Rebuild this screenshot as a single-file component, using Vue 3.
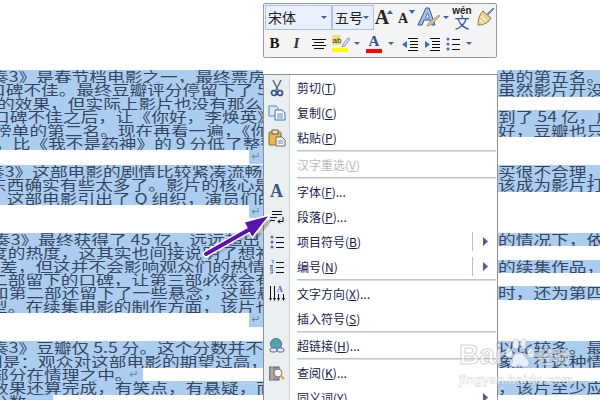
<script setup>
const rows = [
  { l: '奏3》是春节档电影之一，最终票房', x: -9, r: '单的第五名。' },
  { l: '口碑不佳。最终豆瓣评分停留下了 5', x: -12, r: '虽然影片开没' },
  { l: '的效果，但实际上影片也没有那么差', x: -3 },
  { l: '口碑不佳之后，让《你好，李焕英》', x: -8, r: '到了 54 亿，成' },
  { l: '榜单的第二名。现在再看一遍，《你', x: -6, r: '好，豆瓣也只' },
  { l: '，比《我不是药神》的 9 分低了整整', x: -5 },
  { mark: true, h: 14.4 },
  { l: '奏3》这部电影的剧情比较紧凑流畅', x: -13, r: '买很不合理，' },
  { l: '东西确实有些太多了。影片的核心是', x: -11, r: '该成为影片打' },
  { l: '，这部电影引出了 Q 组织，演员们的', x: -11 },
  { mark: true, h: 28 },
  { l: '奏3》最终获得了 45 亿，远远超出', x: -7, r: '的情况下，依' },
  { l: '度的热度，这其实也间接说明了想补', x: -10 },
  { l: '差，但这并不会影响观众们的热情。', x: 0, r: '的续集作品，' },
  { l: '二部留下的口碑，让第三部必然会有', x: -10 },
  { l: '和第二部还留下了一些悬念，这些悬', x: -9, r: '时，还为第四' },
  { l: '型。在续集电影的制作方面，该片也', x: -10 },
  { mark: true, h: 28 },
  { l: '奏3》豆瓣仅 5.5 分。这个分数并不', x: -9, r: '以比较多。最' },
  { l: '别是：观众对这部电影的期望过高，', x: -15, r: '象。在这种情' },
  { l: '部分在情理之中。', x: -9, w: 143, end: true },
  { l: '效果还算完成，有笑点，有悬疑，而', x: -9, r: '，该片至少应' },
  { l: '分数。', x: -9, w: 53 }
]

const items = [
  { t: '剪切', k: 'T', i: 'cut' },
  { t: '复制', k: 'C', i: 'copy' },
  { t: '粘贴', k: 'P', i: 'paste' },
  { sep: true },
  { t: '汉字重选', k: 'V', off: true },
  { sep: true },
  { t: '字体', k: 'F', s: '...', i: 'font' },
  { t: '段落', k: 'P', s: '...', i: 'para' },
  { t: '项目符号', k: 'B', i: 'bullet', sub: true, bar: true },
  { t: '编号', k: 'N', i: 'number', sub: true, bar: true },
  { sep: true },
  { t: '文字方向', k: 'X', s: '...', i: 'dir' },
  { t: '插入符号', k: 'S' },
  { sep: true },
  { t: '超链接', k: 'H', s: '...', i: 'link' },
  { sep: true },
  { t: '查阅', k: 'K', s: '...', i: 'look' },
  { t: '同义词', k: 'Y', sub: true }
]
</script>

<template>
  <div class="page">
    <div class="doc">
      <div v-for="(row, n) in rows" :key="n" class="row" :style="row.h ? { height: row.h + 'px' } : null">
        <div class="left">
          <div v-if="row.mark" class="mark">↵</div>
          <div v-else class="fill" :style="{ width: (row.w || 263) + 'px' }">
            <span class="txt" :style="{ marginLeft: row.x + 'px' }">{{ row.l }}</span>
            <span v-if="row.end" class="ret">↵</span>
          </div>
        </div>
        <div class="gap"></div>
        <div v-if="row.r" class="right"><span class="txt">{{ row.r }}</span></div>
      </div>
    </div>

    <div class="toolbar">
      <div class="tb-row first">
        <div class="combo wide"><span>宋体</span><i class="caret"></i></div>
        <div class="combo narrow"><span>五号</span><i class="caret"></i></div>
        <div class="btn w20"><b class="bigA">A</b><svg class="up" width="6" height="4"><path d="M0 4 3 0l3 4z" fill="#3a5fa8"/></svg></div>
        <div class="btn w22"><b class="smallA">A</b><svg class="up" width="6" height="4"><path d="M0 0h6L3 4z" fill="#3a5fa8"/></svg></div>
        <div class="btn w26">
          <svg width="24" height="22" viewBox="0 0 24 22">
            <path d="M1 19h4l2-5h6l2 5h3L12 2h-3z" fill="#a9c0e6" stroke="#2f559f"/>
            <path d="M8.500 12h4l-2-5z" fill="#fff" stroke="#2f559f" stroke-width=".7"/>
            <path d="M10 20c3 0 5-2 7-4l6-6-1-1-7 5c-2 1-4 3-5 6z" fill="#e2c27a" stroke="#6d7f99" stroke-width=".6"/>
          </svg>
        </div>
        <div class="btn w8"><i class="caret"></i></div>
        <div class="btn w24">
          <span class="wen">wén</span><span class="wen-c">文</span>
        </div>
        <div class="btn w22">
          <svg width="20" height="20" viewBox="0 0 20 20">
            <path d="M12 7 18 1l1 1-6 6z" fill="#6f8fc0" stroke="#456" stroke-width=".5"/>
            <path d="M8 4 16 11c-2 4-6 7-13 7C3 13 4 8 8 4z" fill="#e6cf8f" stroke="#8a7a4a"/>
            <path d="M6 9 11 14M5 13l3 3" stroke="#fff6cf" stroke-width="1.400"/>
          </svg>
        </div>
      </div>
      <div class="tb-row second">
        <div class="btn w21"><b class="bold">B</b></div>
        <div class="btn w23"><i class="ital">I</i></div>
        <div class="btn w21">
          <svg width="16" height="14" viewBox="0 0 16 14" shape-rendering="crispEdges"><path d="M1 2h14M3 5h10M1 8h14M3 11h10" stroke="#111"/></svg>
        </div>
        <div class="btn w23">
          <svg width="18" height="18" viewBox="0 0 18 18">
            <rect x="0" y="0" width="9" height="10" fill="#efe27a"/>
            <text x="0.5" y="8" font-size="8" font-family="Liberation Sans, sans-serif" fill="#223">ab</text>
            <path d="M11 9 16 3l2 1-5 7-3 1z" fill="#d3dbe8" stroke="#6d7f99" stroke-width=".7"/>
            <rect x="0" y="13" width="16" height="4" fill="#fdfd00"/>
          </svg>
        </div>
        <div class="btn w10"><i class="caret"></i></div>
        <div class="btn w24 col">
          <b class="colorA">A</b><i class="redbar"></i>
        </div>
        <div class="btn w10"><i class="caret"></i></div>
        <div class="btn w22 ml3">
          <svg width="16" height="16" viewBox="0 0 16 16"><path d="M6 2.500h10M8 5.500h8M8 8.500h8M8 11.500h8M6 14.500h10" stroke="#111"/><path d="M0 8.500l5-3.500v7z" fill="#3f6cb8"/></svg>
        </div>
        <div class="btn w22">
          <svg width="16" height="16" viewBox="0 0 16 16"><path d="M6 2.500h10M8 5.500h8M8 8.500h8M8 11.500h8M6 14.500h10" stroke="#111"/><path d="M6 8.500 1 5v7z" fill="#3f6cb8"/></svg>
        </div>
        <div class="btn w20">
          <svg width="14" height="14" viewBox="0 0 14 14"><circle cx="2" cy="2" r="1.500" fill="#4a6cb0"/><circle cx="2" cy="7" r="1.500" fill="#4a6cb0"/><circle cx="2" cy="12" r="1.500" fill="#4a6cb0"/><path d="M6 2.500h8M6 7.500h8M6 12.500h8" stroke="#111"/></svg>
        </div>
        <div class="btn w10 ml1"><i class="caret"></i></div>
      </div>
    </div>

    <div class="menu">
      <template v-for="(it, n) in items" :key="n">
        <div v-if="it.sep" class="sep"><div class="gut"></div><div class="line"></div></div>
        <div v-else class="item" :class="{ off: it.off }">
          <div class="gut ic">
            <svg v-if="it.i === 'cut'" width="16" height="18" viewBox="0 0 16 18">
              <path d="M4 1 9 11M12 1 7 11" stroke="#5f6f88" stroke-width="1.600"/>
              <circle cx="5" cy="14" r="2.500" fill="none" stroke="#2c4f96" stroke-width="1.700"/>
              <circle cx="11" cy="14" r="2.500" fill="none" stroke="#2c4f96" stroke-width="1.700"/>
            </svg>
            <svg v-else-if="it.i === 'copy'" width="18" height="16" viewBox="0 0 18 16">
              <path d="M1 1h7l2 2v8H1z" fill="#dbe8f8" stroke="#5a86c4"/>
              <path d="M7 5h7l3 3v7H7z" fill="#fff" stroke="#3f6db8"/>
              <path d="M9 9h6M9 11h6M9 13h6" stroke="#5a86c4"/>
            </svg>
            <svg v-else-if="it.i === 'paste'" width="18" height="18" viewBox="0 0 18 18">
              <rect x="1" y="3" width="12" height="13" rx="1" fill="#e6b94e" stroke="#8a6a1e"/>
              <rect x="4" y="1" width="6" height="4" fill="#e8e4d8" stroke="#6a5a30"/>
              <path d="M8 8h6l3 3v6H8z" fill="#f4f4f4" stroke="#667"/>
              <path d="M10 12h5M10 14h5" stroke="#889"/>
            </svg>
            <b v-else-if="it.i === 'font'" class="fontA">A</b>
            <svg v-else-if="it.i === 'para'" width="14" height="14" viewBox="0 0 14 14">
              <path d="M2 1.500h10M2 4.500h10M0 7.500h7M0 10.500h5" stroke="#111"/>
              <path d="M13 7v4.500H8M10 9.500l-2 2 2 2" stroke="#000" fill="none"/>
            </svg>
            <svg v-else-if="it.i === 'bullet'" width="14" height="14" viewBox="0 0 14 14">
              <circle cx="2" cy="2" r="1.500" fill="#4a6cb0"/><circle cx="2" cy="7" r="1.500" fill="#4a6cb0"/><circle cx="2" cy="12" r="1.500" fill="#4a6cb0"/>
              <path d="M6 2.500h8M6 7.500h8M6 12.500h8" stroke="#111"/>
            </svg>
            <svg v-else-if="it.i === 'number'" width="14" height="14" viewBox="0 0 14 14">
              <path d="M1 0h2v3.500M0 5.500h3l-3 2.500h3M0 10h3l-1 1.500 1 1.500H0" stroke="#4a6cb0" fill="none"/>
              <path d="M6 2.500h8M6 7.500h8M6 12.500h8" stroke="#111"/>
            </svg>
            <svg v-else-if="it.i === 'dir'" width="16" height="17" viewBox="0 0 16 17">
              <path d="M1.500 1v13M5.500 1v13" stroke="#111"/>
              <path d="M9.500 9v5M14.500 9v5" stroke="#111"/>
              <path d="M1.500 16 0 13h3zM5.500 16 4 13h3zM9.500 16 8 13h3zM14.500 16 13 13h3z" fill="#111"/>
              <text x="8" y="7" font-size="8" font-weight="700" font-family="Liberation Serif, serif" fill="#3f5fa8">A</text>
            </svg>
            <svg v-else-if="it.i === 'link'" width="16" height="16" viewBox="0 0 16 16">
              <circle cx="7" cy="6" r="5.500" fill="#5aa0d8" stroke="#3a6f9a"/>
              <path d="M3 3c2-1 3 0 4 1s-1 4-2 3zM8 2c2 0 3 2 3 3l-2 2z" fill="#5aa653"/>
              <rect x="1" y="10" width="7" height="4" rx="2" fill="#e4e8f0" stroke="#5a6a88"/>
              <rect x="8" y="10" width="7" height="4" rx="2" fill="#e4e8f0" stroke="#5a6a88"/>
            </svg>
            <svg v-else-if="it.i === 'look'" width="16" height="16" viewBox="0 0 16 16">
              <rect x="0" y="2" width="10" height="13" fill="#8c90c8" stroke="#5e5f9a"/>
              <path d="M3 2v13" stroke="#e0b24c" stroke-width="1.500"/>
              <circle cx="9" cy="8" r="4" fill="#f2f4f8" stroke="#8a7a4a"/>
              <path d="M12 11l3 3" stroke="#d9a52f" stroke-width="2"/>
            </svg>
          </div>
          <div class="label">{{ it.t }}(<u>{{ it.k }}</u>){{ it.s }}</div>
          <i v-if="it.bar" class="bar"></i>
          <svg v-if="it.sub" class="tri" width="5" height="9"><path d="M0 0l5 4.500L0 9z" fill="#4d5d9c"/></svg>
        </div>
      </template>
    </div>

    <svg class="arrow" width="90" height="60" viewBox="0 0 90 60">
      <path d="M70 13 44 20l8 16z" fill="#444" opacity=".35" transform="translate(3 4)"/>
      <path d="M6 52 52 26" stroke="#555" stroke-width="5" opacity=".25" transform="translate(2 3)"/>
      <path d="M6 52 52 26" stroke="#fff" stroke-width="7" stroke-linecap="round"/>
      <path d="M70 13 44 20l8 16z" fill="#5a12ac" stroke="#fff" stroke-width="1.500" stroke-linejoin="round"/>
      <path d="M6 52 52 26" stroke="#5a12ac" stroke-width="4" stroke-linecap="round"/>
    </svg>

    <div class="mk">
      <div class="mk-top">
        <span class="mk-bai">Bai</span>
        <svg width="34" height="34" viewBox="0 0 34 34" class="paw">
          <ellipse cx="7" cy="15" rx="3.500" ry="5"/><ellipse cx="14" cy="6" rx="3.500" ry="5"/>
          <ellipse cx="22" cy="6" rx="3.500" ry="5"/><ellipse cx="29" cy="15" rx="3.500" ry="5"/>
          <path d="M17 14c5 0 6 5 9 8 3 4 0 8-4 7-3-1-6-1-9 0-5 1-7-4-4-7 3-3 3-8 8-8z"/>
        </svg>
        <span class="mk-jy">经验</span>
      </div>
      <div class="mk-url">jingyan.baidu.com</div>
    </div>
  </div>
</template>

<style>
html, body { margin: 0; background: #fff; }
</style>

<style scoped>
.page {
  position: relative;
  width: 600px;
  height: 400px;
  overflow: hidden;
  background: #fff;
  font-family: "Noto Sans CJK SC", "Liberation Sans", sans-serif;
}
.doc { padding-top: 70px; }
.row { display: flex; height: 13.4px; }
.left { width: 263px; flex: none; display: flex; overflow: hidden; }
.gap { width: 234px; flex: none; }
.right { width: 103px; flex: none; background: #abcdf0; overflow: hidden; padding-left: 1px; box-sizing: border-box; }
.fill { display: flex; background: #abcdf0; overflow: hidden; flex: none; align-items: center; }
.mark {
  margin-left: auto;
  width: 14px;
  height: 13.4px;
  background: #abcdf0;
  color: #6f86a0;
  font: 11px/13px "DejaVu Sans", sans-serif;
  text-align: center;
}
.ret { color: #6f86a0; font: 11px/13px "DejaVu Sans", sans-serif; margin-left: -3px; }
.txt {
  display: block;
  flex: none;
  white-space: nowrap;
  font-size: 17.7px;
  line-height: 13.4px;
  color: #34465f;
  transform: scaleY(0.78);
}

.toolbar {
  position: absolute;
  left: 263px;
  top: 3px;
  width: 234px;
  height: 55px;
  box-sizing: border-box;
  background: #f4f4f4;
  border: 1px solid #9a9a9a;
  border-radius: 2px;
  display: flex;
  flex-direction: column;
}
.tb-row { display: flex; align-items: center; }
.first { height: 27px; padding-left: 1px; }
.second { height: 27px; }
.combo {
  height: 25px;
  box-sizing: border-box;
  background: #e8f1fb;
  border: 1px solid #a9c4e8;
  display: flex;
  align-items: center;
  justify-content: space-between;
  padding: 0 4px 0 2px;
  font-size: 14px;
  color: #222;
}
.wide { width: 67px; }
.narrow { width: 42px; }
.caret {
  display: block;
  width: 0;
  height: 0;
  border: 3px solid transparent;
  border-top: 3px solid #3f5fa8;
  border-bottom: 0;
}
.btn {
  flex: none;
  height: 25px;
  display: flex;
  align-items: center;
  justify-content: center;
  position: relative;
}
.w8 { width: 8px; }
.w10 { width: 10px; }
.w20 { width: 20px; }
.w21 { width: 21px; }
.w22 { width: 22px; }
.w23 { width: 23px; }
.w24 { width: 24px; }
.w26 { width: 26px; }
.ml3 { margin-left: 3px; }
.ml1 { margin-left: 1px; }
.col { flex-direction: column; }
.bigA { font: 700 20px "Liberation Serif", serif; color: #222; margin-right: 4px; }
.smallA { font: 700 14px "Liberation Serif", serif; color: #222; margin-right: 4px; margin-top: 3px; }
.up { position: absolute; right: 1px; top: 5px; }
.wen { position: absolute; top: 1px; left: 0; right: 0; text-align: center; font: 700 10px/10px "Liberation Sans", sans-serif; color: #222; }
.wen-c { position: absolute; top: 9px; left: 0; right: 0; text-align: center; font-size: 15px; line-height: 16px; color: #2f55a8; }
.bold { font: 700 15px "Liberation Serif", serif; color: #111; }
.ital { font: italic 700 15px "Liberation Serif", serif; color: #333; }
.colorA { font: 700 15px/15px "Liberation Serif", serif; color: #2f4f9a; }
.redbar { display: block; width: 16px; height: 4px; background: #f00; }

.menu {
  position: absolute;
  left: 263px;
  top: 74px;
  width: 235px;
  box-sizing: border-box;
  background: #fff;
  border: 1px solid #8f8f8f;
  border-bottom: 0;
  color: #16214f;
}
.item { display: flex; align-items: center; height: 25px; font-size: 12px; position: relative; }
.gut { width: 25px; flex: none; align-self: stretch; background: #e9eef0; border-right: 1px solid #d2d6d8; }
.ic { display: flex; align-items: center; justify-content: center; }
.label { margin-left: 7px; white-space: nowrap; }
.off { color: #b8b8b8; }
.sep { display: flex; height: 2px; }
.line { flex: 1; height: 1px; margin: 0 1px 0 7px; background: #c4c4c4; border-bottom: 1px solid #dedede; }
.bar { position: absolute; left: 208px; top: 3px; width: 1px; height: 19px; background: #c8bfa8; }
.tri { position: absolute; left: 219px; top: 8px; }
.fontA { font: 700 18px "Liberation Serif", serif; color: #3a5684; }

.arrow { position: absolute; left: 200px; top: 202px; }

.mk { position: absolute; left: 459px; top: 337px; width: 120px; pointer-events: none; }
.mk-top { display: flex; align-items: center; height: 36px; }
.mk-bai {
  font: 700 28px/30px "Liberation Sans", sans-serif;
  color: rgba(255, 255, 255, 0.6);
  -webkit-text-stroke: 1px rgba(140, 140, 140, 0.4);
}
.paw { fill: rgba(255, 255, 255, 0.7); stroke: rgba(140, 140, 140, 0.4); margin-left: -1px; }
.mk-jy {
  font-size: 17px;
  font-weight: 700;
  color: rgba(255, 255, 255, 0.65);
  -webkit-text-stroke: 1px rgba(140, 140, 140, 0.35);
  margin-left: 1px;
}
.mk-url {
  font: 700 13px/14px "Liberation Sans", sans-serif;
  color: rgba(255, 255, 255, 0.65);
  -webkit-text-stroke: 0.5px rgba(140, 140, 140, 0.4);
}
</style>
